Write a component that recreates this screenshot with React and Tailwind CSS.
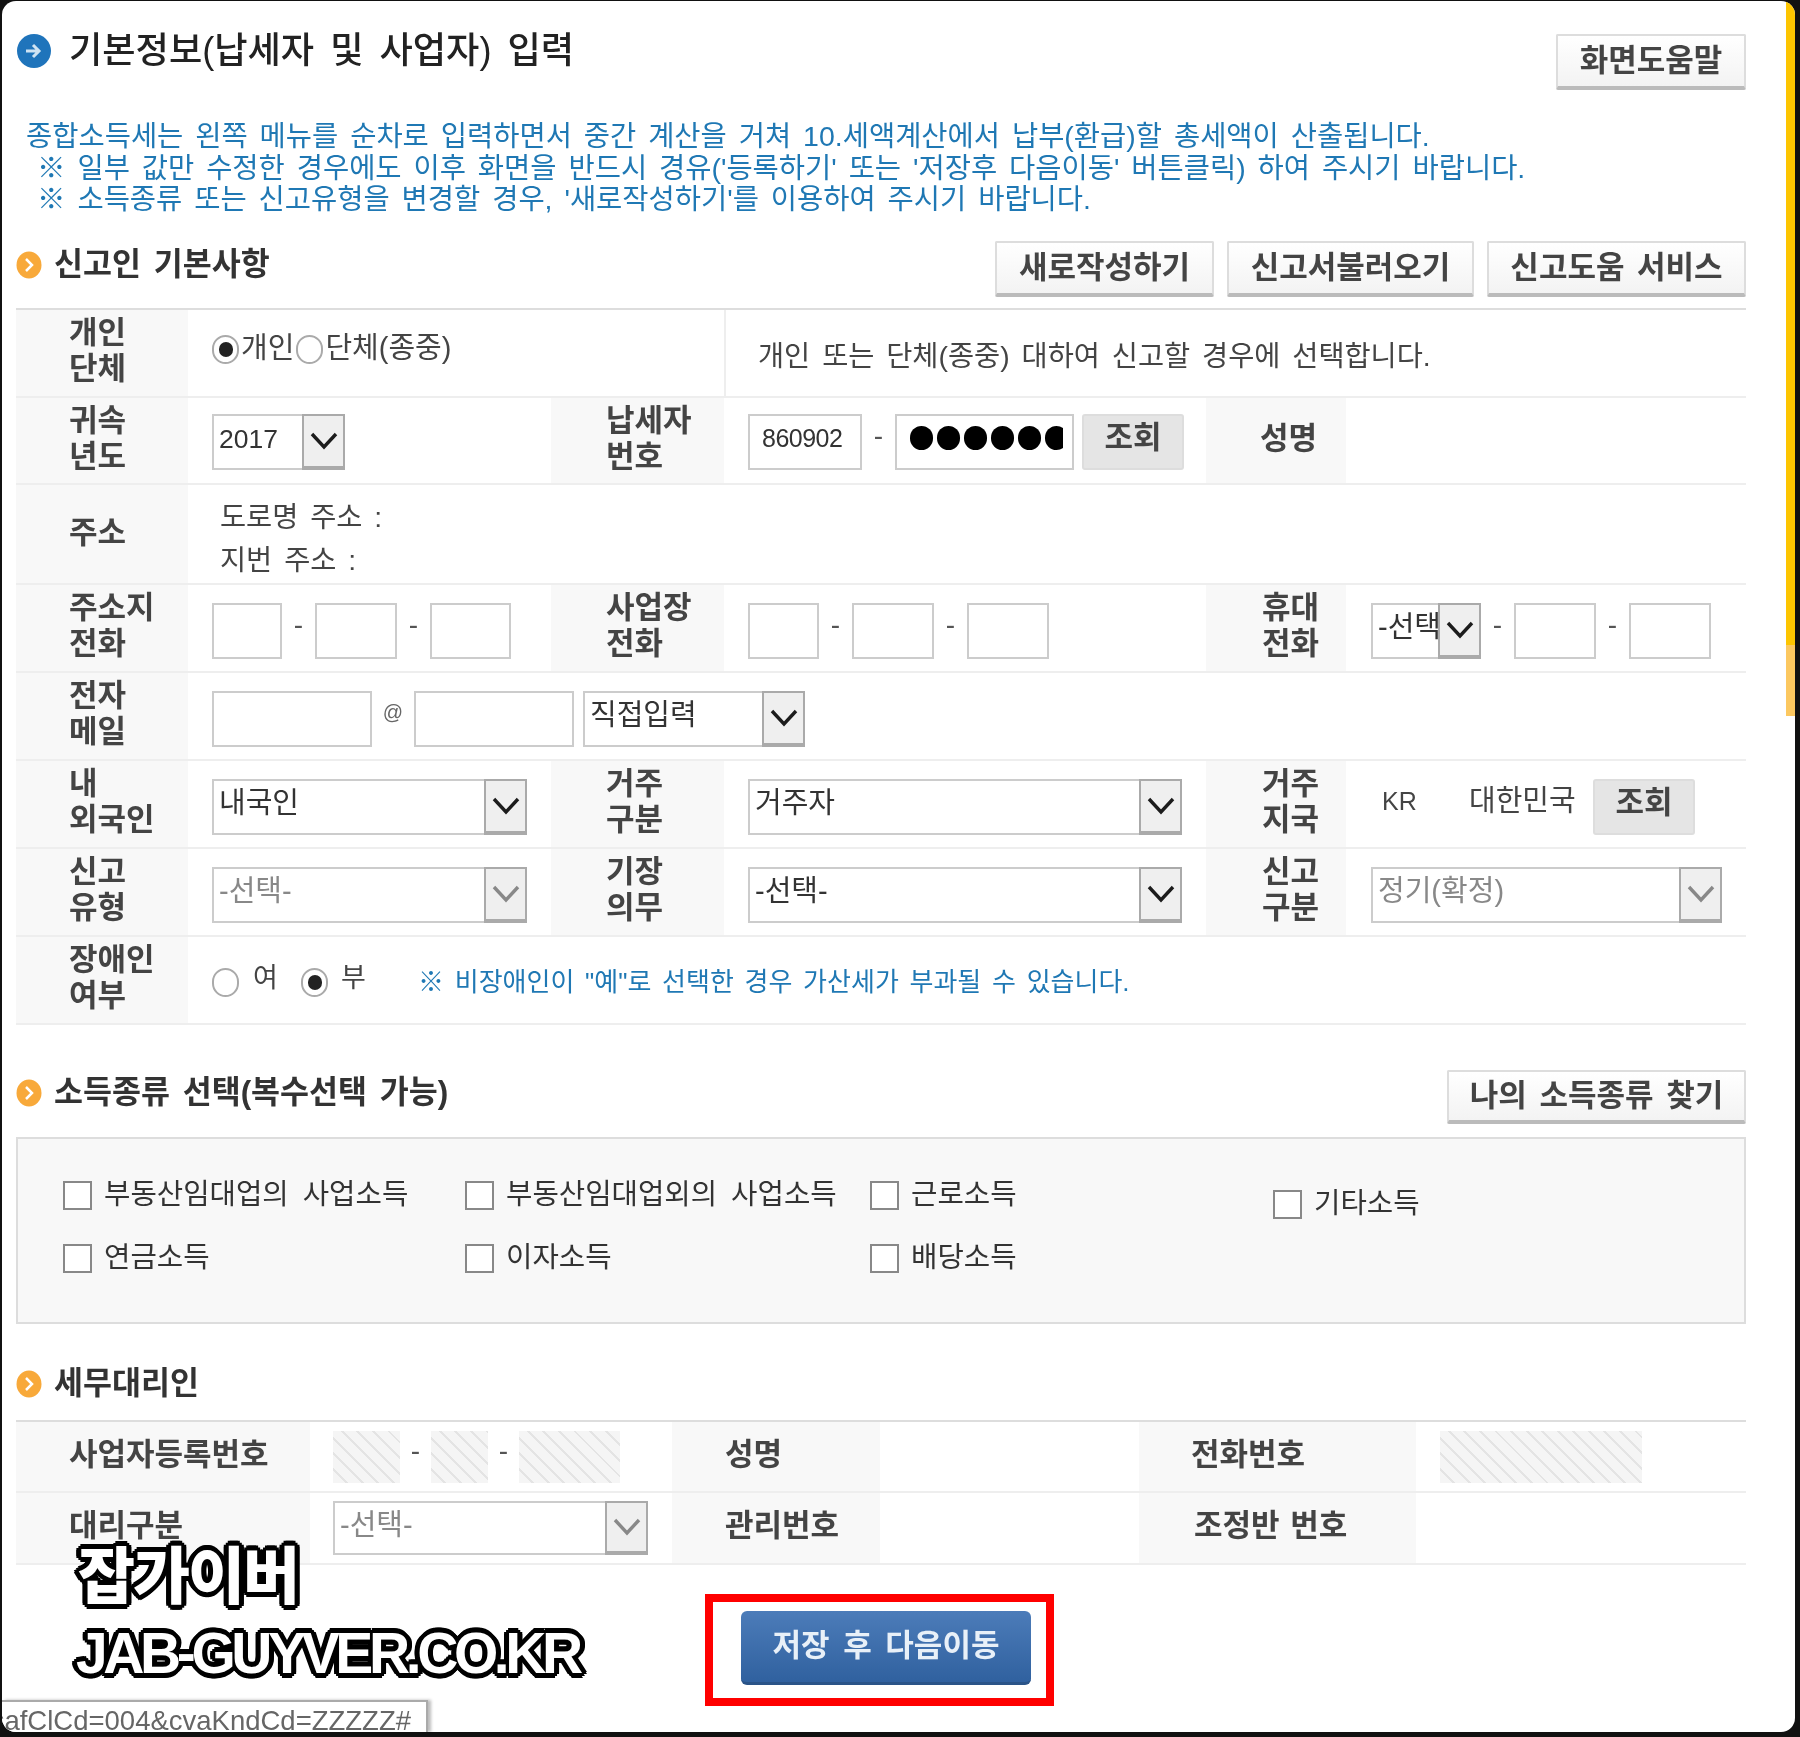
import React from 'react'

const Chevron = ({ muted }) => (
  <svg width="28" height="20" viewBox="0 0 28 20" fill="none">
    <path d="M2 3l12 13 12-13" stroke={muted ? '#888' : '#1c1c1c'} strokeWidth="3.4" />
  </svg>
)

const OrangeDot = () => (
  <svg width="26" height="28" viewBox="0 0 26 28" className="shrink-0">
    <ellipse cx="13" cy="14" rx="12.5" ry="13.5" fill="#f8a93a" />
    <path d="M10 8l6 6-6 6" stroke="#fff" strokeWidth="2.5" fill="none" />
  </svg>
)

const Radio = ({ on }) => (
  <span className="flex h-[29px] w-[27px] shrink-0 items-center justify-center rounded-full border-2 border-[#aaa] bg-white">
    {on && <span className="h-[15px] w-[14px] rounded-full bg-[#222]" />}
  </span>
)

const Box = ({ className = '' }) => <div className={`h-[56px] shrink-0 border-2 border-[#ccc] bg-white ${className}`} />

const Dash = () => <span className="w-[33px] shrink-0 text-center text-[28px] leading-[44px] text-[#555]">-</span>

const Select = ({ value, muted, className = 'h-[56px]' }) => (
  <div className={`flex shrink-0 border-2 border-[#ccc] bg-white ${className}`}>
    <span className={`min-w-0 flex-1 overflow-hidden pl-[5px] text-[29px] leading-[44px] whitespace-nowrap ${muted ? 'text-[#888]' : 'text-[#333]'}`}>{value}</span>
    <span className="-my-[2px] -mr-[2px] flex w-[43px] shrink-0 items-center justify-center border-2 border-b-[4px] border-[#aaa] bg-[#efefef]">
      <Chevron muted={muted} />
    </span>
  </div>
)

const Label = ({ className = '', children }) => (
  <div className={`h-full shrink-0 bg-[#f8f8f8] text-[31px] leading-[35.5px] font-bold whitespace-nowrap text-[#444] ${className}`}>{children}</div>
)

const Row = ({ className = 'h-[88px]', children }) => (
  <div className={`flex border-b-2 border-[#eee] ${className}`}>{children}</div>
)

const ActionButton = ({ className = '', children }) => (
  <button className={`shrink-0 rounded-[2px] border-2 border-b-[4px] border-[#ddd] border-b-[#bbb] bg-gradient-to-b from-white to-[#f3f3f3] text-center text-[31px] leading-[40px] font-bold [word-spacing:4px] text-[#444] ${className}`}>
    {children}
  </button>
)

const Lookup = ({ className = '' }) => (
  <button className={`h-[56px] w-[102px] shrink-0 rounded-[3px] border-2 border-[#ddd] bg-[#e5e5e5] text-[31px] leading-[44px] font-bold text-[#444] ${className}`}>
    <span className="block -translate-y-[4px]">조회</span>
  </button>
)

const Check = ({ children, className = '' }) => (
  <div className={`flex h-[29px] items-start ${className}`}>
    <span className="h-[29px] w-[29px] shrink-0 border-2 border-[#888] bg-white" />
    <span className="ml-[12px] text-[28.7px] leading-[26px] [word-spacing:6px] whitespace-nowrap text-[#333]">{children}</span>
  </div>
)

const Hatch = ({ className = '' }) => (
  <div className={`h-[52px] shrink-0 bg-[repeating-linear-gradient(45deg,#f5f5f5_0,#f5f5f5_9px,#e4e4e4_9px,#e4e4e4_11px)] ${className}`} />
)

const SectionTitle = ({ children }) => (
  <div className="flex -translate-y-[4px] items-center gap-[12px] text-[31.5px] font-bold [word-spacing:4px] text-[#333]">
    <OrangeDot />
    <span className="whitespace-nowrap">{children}</span>
  </div>
)

const haloClass =
  '[text-shadow:4px_0_#000,-4px_0_#000,0_4px_#000,0_-4px_#000,3px_3px_#000,-3px_3px_#000,3px_-3px_#000,-3px_-3px_#000,5px_1px_#000,-5px_1px_#000,1px_5px_#000,1px_-5px_#000,-1px_5px_#000,-1px_-5px_#000,5px_-1px_#000,-5px_-1px_#000]'

export default function App() {
  return (
    <div className="relative h-[1737px] w-[1800px] bg-[#111] pt-px pr-[5px] pb-[5px] pl-[2px] font-['Liberation_Sans','Noto_Sans_CJK_KR',sans-serif] blur-[0.5px]">
      <div className="relative flex h-full overflow-hidden rounded-[14px] bg-white">
        <main className="w-[1784px] shrink-0 pr-[40px] pl-[14px]">
          {/* page title */}
          <div className="flex justify-between pt-[33px]">
            <div className="flex h-[34px] items-center gap-[18px]">
              <svg width="34" height="34" viewBox="0 0 34 34" className="ml-px shrink-0">
                <circle cx="17" cy="17" r="17" fill="#1f74bb" />
                <path d="M9 17h12M16 11l6 6-6 6" stroke="#cfe3f3" strokeWidth="3" fill="none" />
              </svg>
              <h1 className="text-[36.2px] font-medium [word-spacing:6px] whitespace-nowrap text-[#222]">기본정보(납세자 및 사업자) 입력</h1>
            </div>
            <ActionButton className="h-[56px] w-[190px]">화면도움말</ActionButton>
          </div>

          <div className="mt-[31px] h-[93px] text-[28.5px] leading-[31.5px] [word-spacing:4px] whitespace-nowrap text-[#1f78b4]">
            <p className="pl-[10px]">종합소득세는 왼쪽 메뉴를 순차로 입력하면서 중간 계산을 거쳐 10.세액계산에서 납부(환급)할 총세액이 산출됩니다.</p>
            <p className="pl-[21px]">※ 일부 값만 수정한 경우에도 이후 화면을 반드시 경유('등록하기' 또는 '저장후 다음이동' 버튼클릭) 하여 주시기 바랍니다.</p>
            <p className="pl-[21px]">※ 소득종류 또는 신고유형을 변경할 경우, '새로작성하기'를 이용하여 주시기 바랍니다.</p>
          </div>

          <div className="mt-[27px] flex items-center justify-between">
            <SectionTitle>신고인 기본사항</SectionTitle>
            <div className="flex gap-[13px]">
              <ActionButton className="h-[56px] w-[219px]">새로작성하기</ActionButton>
              <ActionButton className="h-[56px] w-[247px]">신고서불러오기</ActionButton>
              <ActionButton className="h-[56px] w-[259px]">신고도움 서비스</ActionButton>
            </div>
          </div>

          {/* basic info table */}
          <div className="mt-[11px] border-t-2 border-[#ddd] text-[#444]">
            <Row>
              <Label className="w-[172px] pt-[5px] pl-[53px]">개인<br />단체</Label>
              <div className="flex w-[536px] items-start gap-[2px] pt-[25px] pl-[24px] text-[29px] leading-[26px]">
                <Radio on />
                <span className="whitespace-nowrap">개인</span>
                <Radio />
                <span className="whitespace-nowrap">단체(종중)</span>
              </div>
              <div className="flex-1 border-l-2 border-[#eee] pt-[33px] pl-[32px] text-[28.4px] leading-[26px] [word-spacing:4px] whitespace-nowrap">
                개인 또는 단체(종중) 대하여 신고할 경우에 선택합니다.
              </div>
            </Row>
            <Row className="h-[87px]">
              <Label className="w-[172px] pt-[5px] pl-[53px]">귀속<br />년도</Label>
              <div className="flex w-[363px] pt-[16px] pl-[24px]">
                <Select value={<span className="text-[26.5px]">2017</span>} className="h-[56px] w-[133px]" />
              </div>
              <Label className="w-[173px] pt-[5px] pl-[55px]">납세자<br />번호</Label>
              <div className="flex w-[482px] pt-[16px] pl-[24px]">
                <div className="h-[56px] w-[114px] shrink-0 border-2 border-[#ccc] bg-white pl-[12px] text-[25px] leading-[44px] tracking-[-0.5px] text-[#333]">860902</div>
                <Dash />
                <div className="h-[56px] w-[179px] shrink-0 border-2 border-[#ccc] bg-white pt-[10px] pl-[13px]">
                  <div className="flex w-[153px] gap-[4px] overflow-hidden">
                    {[0, 1, 2, 3, 4, 5, 6].map((i) => (
                      <span key={i} className="h-[24px] w-[23px] shrink-0 rounded-full bg-black" />
                    ))}
                  </div>
                </div>
                <Lookup className="ml-[8px]" />
              </div>
              <Label className="w-[140px] pt-[23px] pl-[54px]">성명</Label>
            </Row>
            <Row className="h-[100px]">
              <Label className="w-[172px] pt-[30px] pl-[53px]">주소</Label>
              <div className="flex-1 pt-[11px] pl-[32px] text-[28.4px] leading-[43px] [word-spacing:4px] text-[#444]">
                <p>도로명 주소 :</p>
                <p>지번 주소 :</p>
              </div>
            </Row>
            <Row>
              <Label className="w-[172px] pt-[5px] pl-[53px]">주소지<br />전화</Label>
              <div className="flex w-[363px] pt-[18px] pl-[24px]">
                <Box className="w-[70px]" />
                <Dash />
                <Box className="w-[82px]" />
                <Dash />
                <Box className="w-[81px]" />
              </div>
              <Label className="w-[173px] pt-[5px] pl-[55px]">사업장<br />전화</Label>
              <div className="flex w-[482px] pt-[18px] pl-[24px]">
                <Box className="w-[71px]" />
                <Dash />
                <Box className="w-[82px]" />
                <Dash />
                <Box className="w-[82px]" />
              </div>
              <Label className="w-[140px] pt-[5px] pl-[56px]">휴대<br />전화</Label>
              <div className="flex pt-[18px] pl-[25px]">
                <Select value="-선택-" className="h-[56px] w-[110px]" />
                <Dash />
                <Box className="w-[82px]" />
                <Dash />
                <Box className="w-[82px]" />
              </div>
            </Row>
            <Row>
              <Label className="w-[172px] pt-[5px] pl-[53px]">전자<br />메일</Label>
              <div className="flex flex-1 pt-[18px] pl-[24px]">
                <Box className="w-[160px]" />
                <span className="w-[42px] shrink-0 text-center text-[20px] leading-[42px] text-[#666]">@</span>
                <Box className="w-[160px]" />
                <Select value="직접입력" className="ml-[9px] h-[56px] w-[222px]" />
              </div>
            </Row>
            <Row>
              <Label className="w-[172px] pt-[5px] pl-[53px]">내<br />외국인</Label>
              <div className="flex w-[363px] pt-[18px] pl-[24px]">
                <Select value="내국인" className="h-[56px] w-[315px]" />
              </div>
              <Label className="w-[173px] pt-[5px] pl-[55px]">거주<br />구분</Label>
              <div className="flex w-[482px] pt-[18px] pl-[24px]">
                <Select value="거주자" className="h-[56px] w-[434px]" />
              </div>
              <Label className="w-[140px] pt-[5px] pl-[56px]">거주<br />지국</Label>
              <div className="flex pt-[18px] pl-[36px] text-[29px] leading-[44px] text-[#444]">
                <span className="w-[87px] text-[25px]">KR</span>
                <span className="w-[124px] whitespace-nowrap">대한민국</span>
                <Lookup />
              </div>
            </Row>
            <Row>
              <Label className="w-[172px] pt-[5px] pl-[53px]">신고<br />유형</Label>
              <div className="flex w-[363px] pt-[18px] pl-[24px]">
                <Select value="-선택-" muted className="h-[56px] w-[315px]" />
              </div>
              <Label className="w-[173px] pt-[5px] pl-[55px]">기장<br />의무</Label>
              <div className="flex w-[482px] pt-[18px] pl-[24px]">
                <Select value="-선택-" className="h-[56px] w-[434px]" />
              </div>
              <Label className="w-[140px] pt-[5px] pl-[56px]">신고<br />구분</Label>
              <div className="flex pt-[18px] pl-[25px]">
                <Select value="정기(확정)" muted className="h-[56px] w-[351px]" />
              </div>
            </Row>
            <Row className="h-[88px] border-[#ddd]">
              <Label className="w-[172px] pt-[5px] pl-[53px]">장애인<br />여부</Label>
              <div className="flex flex-1 items-center pt-[4px] pl-[24px] text-[27px] text-[#444]">
                <Radio />
                <span className="ml-[14px] w-[48px] -translate-y-[4px]">여</span>
                <Radio on />
                <span className="ml-[13px] w-[77px] -translate-y-[4px]">부</span>
                <span className="text-[26px] [word-spacing:3.5px] whitespace-nowrap text-[#1f78b4]">※ 비장애인이 "예"로 선택한 경우 가산세가 부과될 수 있습니다.</span>
              </div>
            </Row>
          </div>

          {/* income type */}
          <div className="mt-[45px] flex items-center justify-between">
            <SectionTitle>소득종류 선택(복수선택 가능)</SectionTitle>
            <ActionButton className="h-[54px] w-[299px]">나의 소득종류 찾기</ActionButton>
          </div>
          <div className="mt-[13px] grid h-[187px] grid-cols-[402px_405px_403px_1fr] content-start gap-y-[34px] border-2 border-[#ddd] bg-[#f8f8f8] pt-[42px] pl-[45px]">
            <Check>부동산임대업의 사업소득</Check>
            <Check>부동산임대업외의 사업소득</Check>
            <Check>근로소득</Check>
            <Check className="translate-y-[9px]">기타소득</Check>
            <Check>연금소득</Check>
            <Check>이자소득</Check>
            <Check>배당소득</Check>
          </div>

          {/* tax agent */}
          <div className="mt-[40px] h-[30px]">
            <SectionTitle>세무대리인</SectionTitle>
          </div>
          <div className="mt-[26px] border-t-2 border-[#ddd]">
            <Row className="h-[71px]">
              <Label className="w-[294px] pt-[15px] pl-[53px]">사업자등록번호</Label>
              <div className="flex w-[362px] pt-[9px] pl-[23px]">
                <Hatch className="w-[67px]" />
                <span className="w-[31px] text-center text-[28px] leading-[40px] text-[#555]">-</span>
                <Hatch className="w-[57px]" />
                <span className="w-[31px] text-center text-[28px] leading-[40px] text-[#555]">-</span>
                <Hatch className="w-[101px]" />
              </div>
              <Label className="w-[208px] pt-[15px] pl-[53px]">성명</Label>
              <div className="w-[259px]" />
              <Label className="w-[277px] pt-[15px] pl-[52px]">전화번호</Label>
              <div className="flex-1 pt-[9px] pl-[24px]">
                <Hatch className="w-[202px]" />
              </div>
            </Row>
            <Row className="h-[72px] border-[#ddd]">
              <Label className="w-[294px] pt-[15px] pl-[53px]">대리구분</Label>
              <div className="flex w-[362px] pt-[8px] pl-[23px]">
                <Select value="-선택-" muted className="h-[54px] w-[315px]" />
              </div>
              <Label className="w-[208px] pt-[15px] pl-[53px]">관리번호</Label>
              <div className="w-[259px]" />
              <Label className="w-[277px] pt-[15px] pl-[55px] [word-spacing:2px]">조정반 번호</Label>
            </Row>
          </div>

          <div className="mt-[29px] ml-[689px] h-[112px] w-[349px] border-[8px] border-[#f00] pt-[9px] pl-[28px]">
            <button className="h-[74px] w-[290px] rounded-[6px] border-b-[3px] border-[#2a5488] bg-gradient-to-b from-[#4c7cb9] to-[#30619f] text-[31px] font-bold [word-spacing:5px] text-[#e8f0f8]">
              저장 후 다음이동
            </button>
          </div>
        </main>

        {/* scrollbar */}
        <div className="w-[9px] shrink-0">
          <div className="h-[644px] bg-[#fdc500]" />
          <div className="h-[71px] bg-[#fcc860]" />
        </div>

        {/* watermark over the page */}
        <div className={`pointer-events-none absolute top-[1537px] left-[76px] text-[62px] leading-[80px] font-black tracking-[-2px] text-white ${haloClass}`}>
          잡가이버
        </div>
        <div className={`pointer-events-none absolute top-[1612px] left-[74px] text-[57px] leading-[80px] font-bold tracking-[-4.4px] text-white ${haloClass}`}>
          JAB-GUYVER.CO.KR
        </div>

        {/* browser status bar */}
        <div className="absolute bottom-0 left-0 flex h-[32px] w-[426px] justify-end overflow-hidden border-t-2 border-r-2 border-[#aaa] bg-white pt-[3px] pr-[15px] shadow-[3px_0_3px_#bbb]">
          <span className="text-[27.5px] leading-[32px] whitespace-nowrap text-[#666]">safClCd=004&amp;cvaKndCd=ZZZZZ#</span>
        </div>
      </div>
    </div>
  )
}
